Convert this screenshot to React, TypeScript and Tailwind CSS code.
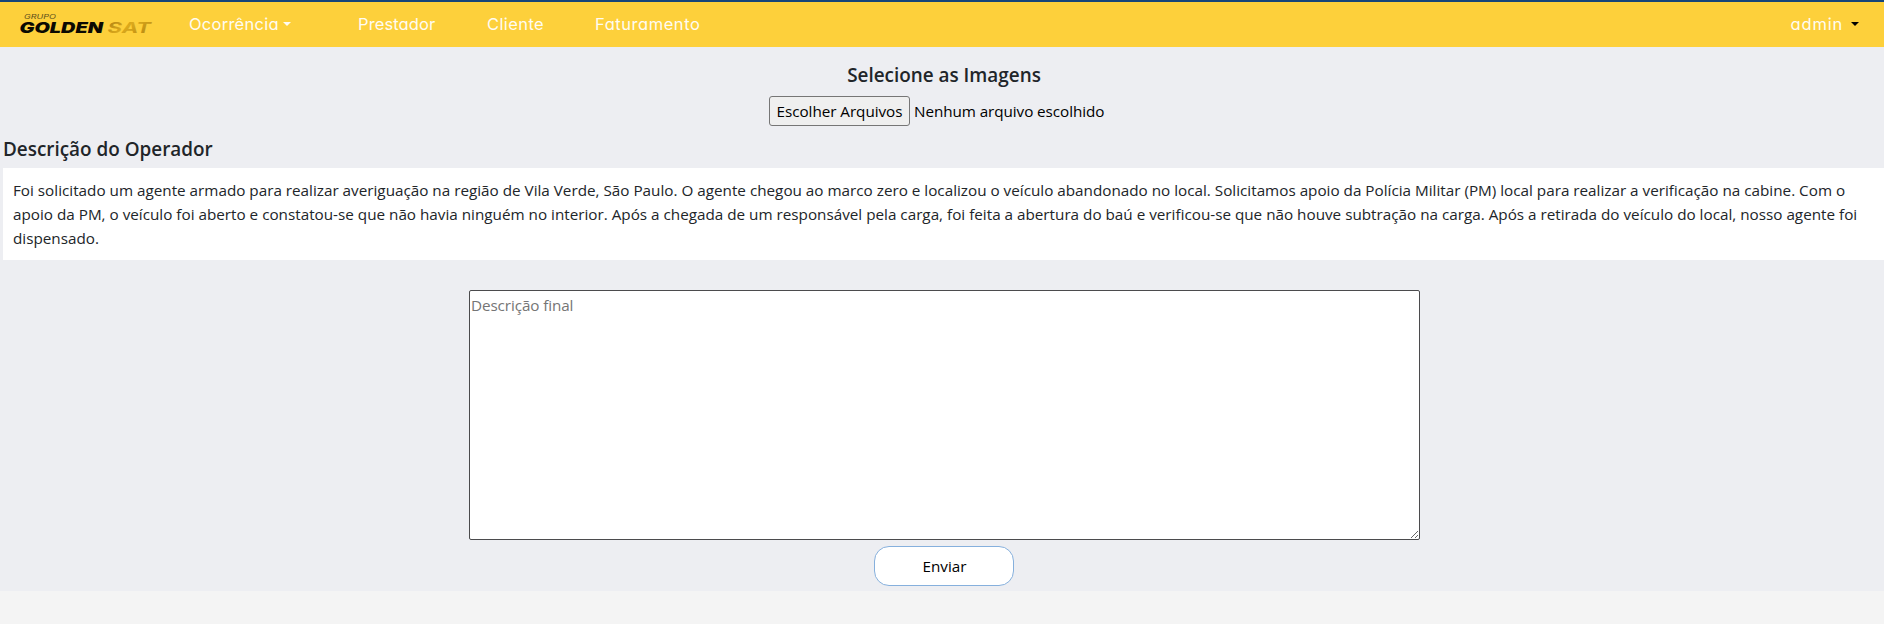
import React from 'react';

const description = [
  'Foi solicitado um agente armado para realizar averiguação na região de Vila Verde, São Paulo. O agente chegou ao marco zero e localizou o veículo abandonado no local. Solicitamos apoio da Polícia Militar (PM) local para realizar a verificação na cabine. Com o',
  'apoio da PM, o veículo foi aberto e constatou-se que não havia ninguém no interior. Após a chegada de um responsável pela carga, foi feita a abertura do baú e verificou-se que não houve subtração na carga. Após a retirada do veículo do local, nosso agente foi',
  'dispensado.',
];

function Logo() {
  return (
    <svg viewBox="0 0 134 33" className="h-[33px] w-[134px] shrink-0 overflow-visible" fontFamily="Inter, sans-serif" fontStyle="italic">
      <defs>
        <linearGradient id="gold" x1="0" y1="0" x2="1" y2="0.6">
          <stop offset="0" stopColor="#a87b12" />
          <stop offset="0.5" stopColor="#dcaa1c" />
          <stop offset="1" stopColor="#b98a12" />
        </linearGradient>
      </defs>
      <text x="4" y="10.6" fontSize="6.2" textLength="32" lengthAdjust="spacingAndGlyphs" fill="#5c4d1c">GRUPO</text>
      <text x="-0.5" y="25" fontSize="14.6" fontWeight="900" textLength="83.5" lengthAdjust="spacingAndGlyphs" fill="#0b0902">GOLDEN</text>
      <text x="87.5" y="25" fontSize="14.6" fontWeight="700" textLength="43.5" lengthAdjust="spacingAndGlyphs" fill="url(#gold)">SAT</text>
    </svg>
  );
}

function Caret({ className }: { className: string }) {
  return <span className={`h-0 w-0 border-x-4 border-t-4 border-x-transparent ${className}`} />;
}

function Navbar() {
  return (
    <nav className="flex h-[47px] items-center border-t-2 border-[#164579] bg-[#fdd03b] pr-[25px] pl-5 font-['Inter',sans-serif] text-[16.5px] whitespace-nowrap text-[#fffcf2] [font-feature-settings:'cv11']">
      <Logo />
      <div className="flex grow items-center pb-0.5">
        <a className="ml-[35px] flex w-[169px] items-center gap-1 tracking-[0.25px]">
          Ocorrência
          <Caret className="border-t-[#fffcf2]" />
        </a>
        <a className="w-[129px] tracking-[0.1px]">Prestador</a>
        <a className="w-[108px] tracking-[0.4px]">Cliente</a>
        <a className="tracking-[0.55px]">Faturamento</a>
        <a className="ml-auto flex items-center gap-2 tracking-[0.8px]">
          admin
          <Caret className="border-t-black" />
        </a>
      </div>
    </nav>
  );
}

export default function App() {
  return (
    <div className="h-[624px] overflow-hidden bg-[#f4f4f4] font-['Open_Sans',sans-serif] text-[15.25px] leading-6 text-[#212529]">
      <Navbar />
      <main className="h-[544px] bg-[#edeef2] pl-[3px]">
        <section className="flex flex-col items-center pt-4">
          <h5 className="mb-2 ml-px text-[18.9px] leading-6 font-semibold">Selecione as Imagens</h5>
          <div className="mr-2.5 flex h-[31px] items-center gap-1 text-black">
            <button className="flex h-[30px] w-[141px] items-center justify-center rounded-[3px] border border-[#767676] bg-[#efefef] tracking-[-0.05px] whitespace-nowrap">
              Escolher Arquivos
            </button>
            <span className="w-[194px] tracking-[-0.07px] whitespace-nowrap">Nenhum arquivo escolhido</span>
          </div>
        </section>
        <section>
          <h5 className="mt-[11px] mb-[7px] text-[18.9px] leading-6 font-semibold">Descrição do Operador</h5>
          <div className="h-[92px] bg-white px-2.5 pt-2.5">
            {description.map((line) => (
              <p key={line} className="whitespace-nowrap">{line}</p>
            ))}
          </div>
        </section>
        <form className="mt-[30px] flex flex-col items-center">
          <textarea
            placeholder="Descrição final"
            className="ml-0.5 block h-[250px] w-[951px] resize rounded-[2px] border border-[#4b4b4d] bg-white px-px py-0.5 tracking-[-0.1px] placeholder:text-[#757575]"
          />
          <button
            type="button"
            className="mt-1.5 h-10 w-[140px] rounded-[15px] border border-[#86b0dd] bg-white pl-0.5 text-black"
          >
            Enviar
          </button>
        </form>
      </main>
    </div>
  );
}
